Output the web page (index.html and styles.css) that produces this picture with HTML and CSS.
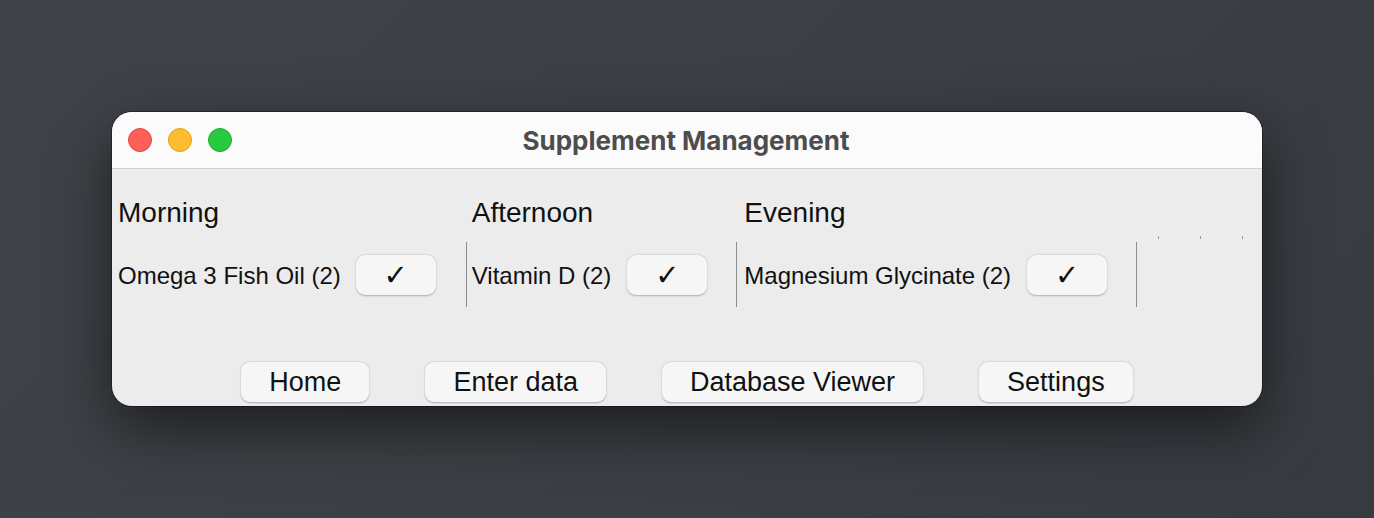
FILE: index.html
```html
<!DOCTYPE html>
<html>
<head>
<meta charset="utf-8">
<link rel="stylesheet" href="styles.css">
</head>
<body>
<div class="window">
  <div class="titlebar">
    <div class="lights">
      <span class="light red"></span>
      <span class="light yellow"></span>
      <span class="light green"></span>
    </div>
    <div class="title">Supplement Management</div>
  </div>
  <div class="content">
    <div class="schedule">
      <div class="slot slot-first">
        <div class="slot-head">Morning</div>
        <div class="slot-body">
          <span class="item">Omega 3 Fish Oil (2)</span>
          <button class="check">✓</button>
          <span class="sep"></span>
        </div>
      </div>
      <div class="slot">
        <div class="slot-head">Afternoon</div>
        <div class="slot-body">
          <span class="item">Vitamin D (2)</span>
          <button class="check">✓</button>
          <span class="sep"></span>
        </div>
      </div>
      <div class="slot slot-last">
        <div class="slot-head">Evening</div>
        <div class="slot-body">
          <span class="item">Magnesium Glycinate (2)</span>
          <button class="check">✓</button>
          <span class="sep"></span>
        </div>
      </div>
      <div class="ticks">
        <span class="tick"></span>
        <span class="tick"></span>
        <span class="tick"></span>
      </div>
    </div>
    <div class="nav">
      <button class="navbtn">Home</button>
      <button class="navbtn">Enter data</button>
      <button class="navbtn">Database Viewer</button>
      <button class="navbtn">Settings</button>
    </div>
  </div>
</div>
</body>
</html>
```

FILE: styles.css
```css
html, body {
  margin: 0;
  padding: 0;
}
body {
  width: 1374px;
  height: 518px;
  background: linear-gradient(135deg, #404348 0%, #3b3e43 60%, #373b40 100%);
  overflow: hidden;
  padding-top: 112px;
  padding-left: 112px;
  box-sizing: border-box;
}
.window {
  width: 1150px;
  height: 294px;
  border-radius: 20px;
  background: #ececec;
  overflow: hidden;
  box-shadow: 0 22px 60px rgba(0, 0, 0, 0.55), 0 0 0 1px rgba(0, 0, 0, 0.35);
  display: flex;
  flex-direction: column;
}
.titlebar {
  height: 56px;
  background: #fbfbfb;
  border-bottom: 1px solid #cfcfcf;
  display: flex;
  align-items: center;
  position: relative;
  flex: none;
}
.lights {
  display: flex;
  gap: 16px;
  padding-left: 16px;
}
.light {
  width: 24px;
  height: 24px;
  border-radius: 50%;
  box-sizing: border-box;
}
.red { background: #fe5f57; border: 1px solid #e2463f; }
.yellow { background: #febc2e; border: 1px solid #e1a116; }
.green { background: #28c840; border: 1px solid #1aab29; }
.title {
  position: absolute;
  left: 0;
  right: 0;
  top: 0;
  bottom: 0;
  display: flex;
  align-items: center;
  justify-content: center;
  font-family: Inter, "Liberation Sans", sans-serif;
  font-weight: 700;
  font-size: 26px;
  color: #4d4d4d;
  padding-right: 2px;
  pointer-events: none;
}
.content {
  flex: 1;
  display: flex;
  flex-direction: column;
  font-family: "Liberation Sans", Arial, sans-serif;
  color: #111;
}
.schedule {
  display: flex;
  align-items: flex-start;
  padding-left: 6px;
}
.slot {
  display: flex;
  flex-direction: column;
  padding-left: 5px;
}
.slot-first {
  padding-left: 0;
}
.slot-last {
  padding-left: 7px;
}
.slot-head {
  font-size: 28px;
  line-height: 30px;
  height: 30px;
  padding-top: 29px;
  padding-bottom: 14px;
}
.slot-body {
  display: flex;
  align-items: center;
  height: 65px;
}
.item {
  font-size: 24px;
  line-height: 28px;
  padding-top: 2px;
}
.check {
  width: 80px;
  height: 40px;
  margin-left: 16px;
  margin-right: 29px;
  border: none;
  border-radius: 9px;
  background: #f6f6f6;
  box-shadow: 0 0.5px 2px rgba(0, 0, 0, 0.28);
  font-family: "DejaVu Sans", sans-serif;
  font-size: 29px;
  color: #111;
  padding: 0;
  display: flex;
  align-items: center;
  justify-content: center;
}
.slot-first .check {
  margin-left: 15px;
  margin-right: 30px;
}
.sep {
  width: 1px;
  height: 65px;
  background: #8e8e8e;
}
.ticks {
  display: flex;
  gap: 41px;
  padding-left: 21px;
  margin-top: 67px;
}
.tick {
  width: 1px;
  height: 3px;
  background: #9a9a9a;
}
.nav {
  display: flex;
  justify-content: center;
  gap: 56px;
  margin-top: 55px;
}
.navbtn {
  height: 40px;
  padding: 0 28px;
  border: none;
  border-radius: 9px;
  background: #f6f6f6;
  box-shadow: 0 0.5px 2px rgba(0, 0, 0, 0.28);
  font-family: "Liberation Sans", Arial, sans-serif;
  font-size: 27px;
  color: #111;
}
```
